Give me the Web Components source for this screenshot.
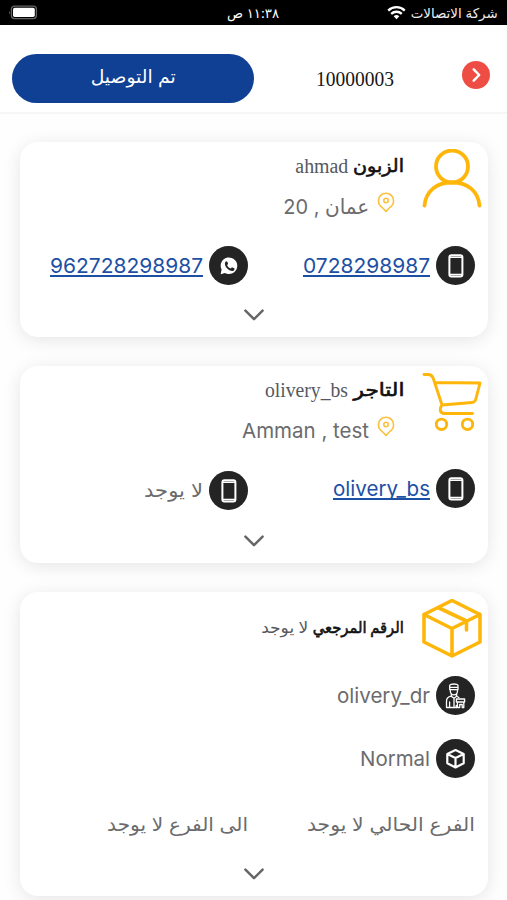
<!DOCTYPE html>
<html lang="ar" dir="rtl">
<head>
<meta charset="utf-8">
<title>الطلب 10000003</title>
<style>
html, body { margin: 0; height: 900px; overflow: hidden; background: #fefefe; }
body { font-family: Inter, "DejaVu Sans", sans-serif; color: #6b6b6d; }
</style>
</head>
<body>
<order-screen></order-screen>
<script>
const define = (name, html, setup) => {
  const tpl = document.createElement('template');
  tpl.innerHTML = html;
  customElements.define(name, class extends HTMLElement {
    connectedCallback() {
      if (this.shadowRoot) return;
      this.attachShadow({ mode: 'open' }).append(tpl.content.cloneNode(true));
      if (setup) setup(this, this.shadowRoot);
    }
  });
};

/* One line of text, horizontally fitted to the width given in "w". */
define('fit-text', `
<style>
:host { display: block; flex: none; height: 26px; line-height: 26px; white-space: nowrap; font-size: 20.5px; }
span { display: inline-block; transform-origin: right center; }
:host([dir=ltr]) span { transform-origin: left center; }
:host([link]) { color: #1c50a5; }
:host([link]) span { text-decoration: underline; text-decoration-thickness: 1.5px; text-underline-offset: 2px; text-decoration-skip-ink: none; }
:host([serif]) { font-family: "Liberation Serif", "DejaVu Sans", serif; font-size: 20px; }
</style><span><slot></slot></span>`, (el, root) => {
  const w = +el.getAttribute('w');
  const span = root.querySelector('span');
  el.style.width = w + 'px';
  span.style.transform = 'scaleX(' + w / span.getBoundingClientRect().width + ')';
});

const icons = {
  user: ['0 0 60 60', `<g fill="none" stroke="#ffb60b" stroke-width="3.8" stroke-linecap="round"><circle cx="30" cy="17.500" r="16"/><path d="M2.500 56.500C4 41.500 15 33.500 30 33.500s26 8 27.500 23"/></g>`],
  cart: ['0 0 60 60', `<g fill="none" stroke="#ffb60b" stroke-width="2.900" stroke-linecap="round" stroke-linejoin="round"><path d="M2 1.500h4c3 0 4.500 1.500 5.500 4.500L20 32l30-2.500q3-.3 3.700-3L58 10 13 9.500M20 32c-2.500 3-3 8.500 3 8.500h27.500"/><circle cx="19.500" cy="51.300" r="5.200"/><circle cx="45.500" cy="51.300" r="5.200"/></g>`],
  box: ['0 0 60 60', `<g fill="none" stroke="#ffb60b" stroke-width="3.600" stroke-linecap="round" stroke-linejoin="round"><path d="M30 1.500 58 15.500v27.500L30 57 2 43V15.500zM2 15.500l28 14 28-14M30 29.500v27.500M17 9 44.500 22v9"/></g>`],
  pin: ['0 0 18 22', `<g fill="none" stroke="#fbc13d" stroke-width="1.600" stroke-linejoin="round"><path d="M9 1.200a7.600 7.600 0 0 1 7.600 7.600c0 3.600-2.100 5.800-4.500 7.400L9 19.500l-3.100-3.300C3.500 14.600 1.400 12.400 1.400 8.800A7.600 7.600 0 0 1 9 1.200z"/><circle cx="9" cy="8.500" r="2.200"/></g>`],
  phone: ['0 0 39 39', `<rect x="13.400" y="9.300" width="13" height="21.200" rx="2" fill="none" stroke="#fff" stroke-width="2"/><path d="M14 11.300h12M14 28.500h12" stroke="#fff" stroke-width="1.400"/>`],
  whatsapp: ['0 0 39 39', `<path d="M11.600 28.200l1-4.600a8.300 8.300 0 1 1 3.300 3.400z" fill="#fff"/><path d="M16.200 16.200c.6-1.300 1.800-1.300 2.200-.2l.6 1.500c.2.600-.7 1.300-.9 1.700.7 1.600 2 2.700 3.600 3.400.6-.3 1-1.500 1.700-1.200l1.800.9c.7.400.2 2-.8 2.500-1.400.7-3.700 0-5.900-2-2.100-1.900-3.200-4.700-2.300-6.600z" fill="#242424"/>`],
  cube: ['0 0 39 39', `<g fill="none" stroke="#fff" stroke-width="2.200" stroke-linejoin="round"><path d="M19.500 11 27.700 15v9.300l-8.200 4.200-8.200-4.200V15zM11.300 15l8.200 4 8.200-4M19.500 19v9.500"/></g>`],
  courier: ['0 0 39 39', `<g fill="none" stroke="#fff" stroke-width="1.300" stroke-linejoin="round" stroke-linecap="round"><path d="M13.700 13.600V9.500c0-2 8.300-2 8.300 0v4.100zM13.700 11.300H22M14.200 13.700c0 7 7.400 7 7.400 0M15.300 18v2.200l2.700 2 2.700-2V18M15.200 20.200c-3.500.7-4.700 2-4.700 5V31.500h10M13.600 31v-5M18 22.500V31M20.700 20.300l2.200 1.200"/><path d="M20.400 23h8.200v3h-8.200zM21.400 26v5.500h2.300V28.500h2.500V31.500h1.600V26M20.200 29.500v2"/></g>`],
  chevron: ['0 0 20 12', `<path d="M1.400 1.600 10 10.200l8.600-8.600" fill="none" stroke="#666" stroke-width="2.500" stroke-linecap="round" stroke-linejoin="round"/>`],
  next: ['0 0 28 28', `<path d="M11.700 8.300 17.200 14l-5.500 5.700" fill="none" stroke="#fff" stroke-width="2.500" stroke-linecap="round" stroke-linejoin="round"/>`],
  wifi: ['0 0 19 15', `<g fill="none" stroke="#fff" stroke-width="2.300"><path d="M1.200 5.600a11.800 11.800 0 0 1 16.600 0M4.200 8.900a7.600 7.600 0 0 1 10.600 0"/></g><path d="M9.500 14.200 6.700 11.300a4 4 0 0 1 5.600 0z" fill="#fff"/>`],
  battery: ['0 0 30 15', `<rect x="3.400" y="1.200" width="25" height="12.400" rx="3" fill="none" stroke="#666" stroke-width="1.300"/><rect x="5" y="2.800" width="21.800" height="9.200" rx="1.700" fill="#fff"/><path d="M1.800 5.500q-1.500 2 0 4z" fill="#666"/>`]
};
define('ui-icon', `<style>:host { display: block; flex: none; } svg { display: block; width: 100%; height: 100%; }
:host([disc]) { width: 39px; height: 39px; border-radius: 50%; background: #242424; }</style><svg></svg>`, (el, root) => {
  const [box, body] = icons[el.getAttribute('name')];
  const svg = root.querySelector('svg');
  svg.setAttribute('viewBox', box);
  svg.innerHTML = body;
});

define('status-bar', `
<style>
:host { display: flex; height: 25px; background: #000; color: #eee; align-items: center; justify-content: space-between; padding: 0 9px 0 8px; box-sizing: border-box; }
.net { display: flex; gap: 5px; align-items: center; width: 200px; }
.time { color: #fff; }
.bat { width: 200px; display: flex; justify-content: flex-end; }
fit-text { font-size: 13.5px; height: 24px; line-height: 24px; }
</style>
<div class="net"><fit-text w="87">شركة الاتصالات</fit-text><ui-icon name="wifi" style="width:19px;height:15px"></ui-icon></div>
<fit-text class="time" w="52">١١:٣٨ ص</fit-text>
<div class="bat"><ui-icon name="battery" style="width:30px;height:15px"></ui-icon></div>`);

define('order-header', `
<style>
:host { display: flex; height: 89px; box-sizing: border-box; border-bottom: 2px solid #f6f6f6; padding: 0 17px 0 12px; background: #fff; }
.next { width: 28px; height: 28px; margin-top: 36px; border-radius: 50%; background: #ee4d43; }
.num { color: #161616; margin: 41px 68px 0 62px; }
.btn { width: 242px; height: 49px; margin-top: 29px; border-radius: 25px; background: #0f4093; color: #fff; display: flex; justify-content: center; }
.btn fit-text { font-size: 18px; margin-top: 10px; }
</style>
<ui-icon class="next" name="next"></ui-icon>
<fit-text class="num" serif w="78">10000003</fit-text>
<div class="btn"><fit-text w="85">تم التوصيل</fit-text></div>`);

define('info-card', `
<style>
:host { display: flex; flex-direction: column; box-sizing: border-box; width: 468px; margin: 0 19px 0 20px; border-radius: 18px; background: #fff; box-shadow: 0 3px 18px rgba(0,0,0,.10); }
.head { display: flex; padding: 7px 6px 0 0; gap: 18px; height: 96px; box-sizing: border-box; }
.pic { width: 60px; height: 60px; flex: none; }
.foot { margin-top: auto; padding-bottom: 16px; display: flex; justify-content: center; }
.foot ui-icon { width: 20px; height: 12px; }
</style>
<div class="head"><div class="pic"></div><div><slot name="head"></slot></div></div>
<slot></slot>
<div class="foot"><ui-icon name="chevron"></ui-icon></div>`, (el, root) => {
  const icon = document.createElement('ui-icon');
  icon.setAttribute('name', el.getAttribute('icon'));
  root.querySelector('.pic').append(icon);
});

define('title-line', `
<style>:host { display: flex; gap: 5px; }</style>
<slot></slot>`);

define('contact-line', `
<style>:host { display: flex; align-items: center; gap: 6px; width: 227px; height: 39px; flex: none; } </style>
<slot></slot>`);

define('order-screen', `
<style>
:host { display: block; width: 507px; height: 900px; overflow: hidden; }
.k { color: #111; font-size: 18px; -webkit-text-stroke: .6px #111; }
.v { color: #555860; }
.addr { display: flex; gap: 8px; padding-right: 9px; margin-top: 13px; }
.addr ui-icon { width: 18px; height: 22px; }
.addr fit-text { margin-top: 2px; }
.row { display: flex; padding-right: 13px; }
.list { display: flex; flex-direction: column; gap: 29px; padding-top: 28px; }
.branch { display: flex; padding-right: 13px; margin-top: 34px; gap: 59px; }
.branch fit-text { font-size: 19px; }
.ar { font-size: 19px; }
.small { font-size: 16px; }
</style>
<status-bar></status-bar>
<order-header></order-header>
<div class="list">
  <info-card icon="user" style="height:195px">
    <div slot="head">
      <title-line style="margin-top:4px"><fit-text class="k" serif w="51">الزبون</fit-text><fit-text class="v" serif w="53">ahmad</fit-text></title-line>
      <div class="addr"><ui-icon name="pin"></ui-icon><fit-text w="86">عمان , 20</fit-text></div>
    </div>
    <div class="row" style="margin-top:8px">
      <contact-line><ui-icon disc name="phone"></ui-icon><fit-text link w="127" dir="ltr">0728298987</fit-text></contact-line>
      <contact-line><ui-icon disc name="whatsapp"></ui-icon><fit-text link w="153" dir="ltr">962728298987</fit-text></contact-line>
    </div>
  </info-card>
  <info-card icon="cart" style="height:197px">
    <div slot="head">
      <title-line style="margin-top:4px"><fit-text class="k" serif w="51">التاجر</fit-text><fit-text class="v" serif w="83" dir="ltr">olivery_bs</fit-text></title-line>
      <div class="addr"><ui-icon name="pin"></ui-icon><fit-text w="127" dir="ltr">Amman , test</fit-text></div>
    </div>
    <div class="row" style="margin-top:7px">
      <contact-line><ui-icon disc name="phone"></ui-icon><fit-text link w="97" dir="ltr">olivery_bs</fit-text></contact-line>
      <contact-line style="margin-top:2px"><ui-icon disc name="phone"></ui-icon><fit-text class="ar" w="59">لا يوجد</fit-text></contact-line>
    </div>
  </info-card>
  <info-card icon="box" style="height:304px">
    <div slot="head">
      <title-line style="margin-top:16px"><fit-text class="k small" serif w="91">الرقم المرجعي</fit-text><fit-text class="v small" serif w="47">لا يوجد</fit-text></title-line>
    </div>
    <div class="row" style="margin-top:-12px"><contact-line><ui-icon disc name="courier"></ui-icon><fit-text w="93" dir="ltr">olivery_dr</fit-text></contact-line></div>
    <div class="row" style="margin-top:24px"><contact-line><ui-icon disc name="cube"></ui-icon><fit-text w="70" dir="ltr">Normal</fit-text></contact-line></div>
    <div class="branch"><fit-text w="168">الفرع الحالي لا يوجد</fit-text><fit-text w="141">الى الفرع لا يوجد</fit-text></div>
  </info-card>
</div>`);
</script>
</body>
</html>
